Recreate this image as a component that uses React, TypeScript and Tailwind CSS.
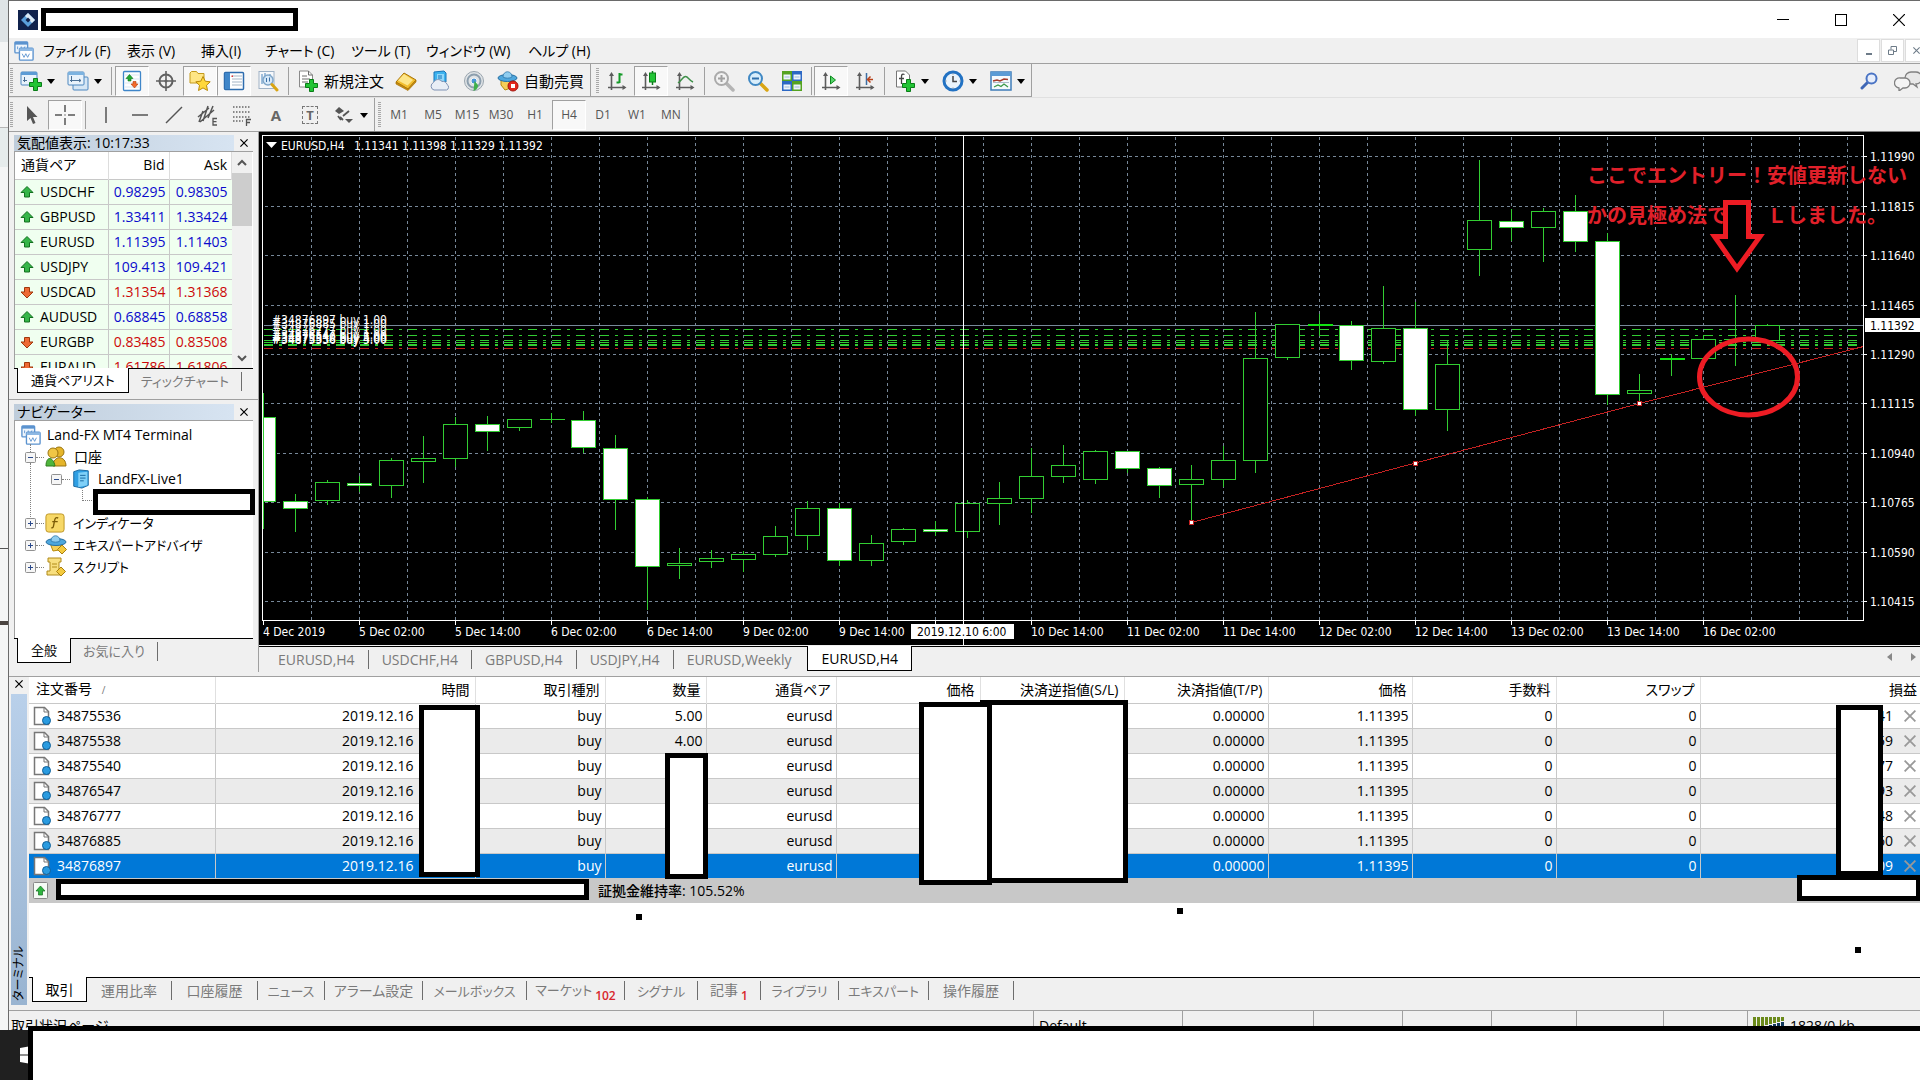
import type { ReactNode } from 'react';

/* ── Data ─────────────────────────────────────────────────────────────────── */

const MENUS = [
  { label: 'ファイル (F)', width: 'w-[84px]' },
  { label: '表示 (V)', width: 'w-[74px]' },
  { label: '挿入(I)', width: 'w-[64px]' },
  { label: 'チャート (C)', width: 'w-[86px]' },
  { label: 'ツール (T)', width: 'w-[75px]' },
  { label: 'ウィンドウ (W)', width: 'w-[102px]' },
  { label: 'ヘルプ (H)', width: 'w-[84px]' },
];

const TIMEFRAMES = ['M1', 'M5', 'M15', 'M30', 'H1', 'H4', 'D1', 'W1', 'MN'];

const QUOTES = [
  { symbol: 'USDCHF', bid: '0.98295', ask: '0.98305', up: true },
  { symbol: 'GBPUSD', bid: '1.33411', ask: '1.33424', up: true },
  { symbol: 'EURUSD', bid: '1.11395', ask: '1.11403', up: true },
  { symbol: 'USDJPY', bid: '109.413', ask: '109.421', up: true },
  { symbol: 'USDCAD', bid: '1.31354', ask: '1.31368', up: false },
  { symbol: 'AUDUSD', bid: '0.68845', ask: '0.68858', up: true },
  { symbol: 'EURGBP', bid: '0.83485', ask: '0.83508', up: false },
  { symbol: 'EURAUD', bid: '1.61786', ask: '1.61806', up: false },
];

// [high, low, body top, body bottom, kind] — w: bear, h: bull, l: doji, g: bright doji
type Candle = [number, number, number, number, 'w' | 'h' | 'l' | 'g'];
const CANDLES: Candle[] = [
  [392, 528, 417, 501, 'w'], [493, 531, 501, 508, 'w'], [479, 504, 482, 500, 'h'], [475, 491, 483, 485, 'w'],
  [457, 497, 460, 485, 'h'], [435, 482, 458, 461, 'h'], [416, 466, 424, 458, 'h'], [415, 450, 424, 431, 'w'],
  [418, 430, 419, 427, 'h'], [412, 422, 419, 419, 'l'], [410, 452, 420, 447, 'w'], [434, 529, 448, 499, 'w'],
  [496, 609, 499, 566, 'w'], [547, 578, 563, 565, 'h'], [549, 567, 558, 561, 'h'], [550, 571, 554, 559, 'h'],
  [525, 556, 536, 554, 'h'], [500, 549, 508, 535, 'h'], [502, 565, 508, 560, 'w'], [534, 565, 543, 560, 'h'],
  [527, 544, 529, 541, 'h'], [520, 535, 529, 531, 'w'], [499, 537, 503, 531, 'h'], [481, 524, 498, 503, 'h'],
  [447, 512, 476, 498, 'h'], [444, 482, 465, 476, 'h'], [449, 483, 451, 479, 'h'], [451, 472, 451, 468, 'w'],
  [466, 497, 468, 485, 'w'], [464, 522, 479, 484, 'h'], [445, 486, 460, 479, 'h'], [311, 472, 358, 460, 'h'],
  [324, 359, 324, 357, 'h'], [313, 335, 324, 325, 'g'], [320, 369, 325, 360, 'w'], [285, 363, 328, 361, 'h'],
  [301, 415, 328, 409, 'w'], [339, 430, 364, 409, 'h'], [159, 275, 220, 249, 'h'], [208, 240, 221, 227, 'w'],
  [207, 261, 211, 227, 'h'], [194, 251, 211, 241, 'w'], [232, 404, 241, 394, 'w'], [373, 402, 390, 393, 'h'],
  [353, 375, 358, 359, 'g'], [334, 359, 339, 358, 'h'], [294, 365, 339, 339, 'l'], [323, 341, 325, 340, 'h'],
];

const PRICES = [
  { y: 156, label: '1.11990' }, { y: 206, label: '1.11815' }, { y: 255, label: '1.11640' },
  { y: 305, label: '1.11465' }, { y: 354, label: '1.11290' }, { y: 403, label: '1.11115' },
  { y: 453, label: '1.10940' }, { y: 502, label: '1.10765' }, { y: 552, label: '1.10590' },
  { y: 601, label: '1.10415' },
];

const TIMES = [
  '4 Dec 2019', '5 Dec 02:00', '5 Dec 14:00', '6 Dec 02:00', '6 Dec 14:00', '9 Dec 02:00', '9 Dec 14:00', '',
  '10 Dec 14:00', '11 Dec 02:00', '11 Dec 14:00', '12 Dec 02:00', '12 Dec 14:00', '13 Dec 02:00',
  '13 Dec 14:00', '16 Dec 02:00',
];

const POSITIONS = [
  { y: 325, label: '#34876897 buy 1.00' }, { y: 329, label: '#34876885 buy 1.00' },
  { y: 335, label: '#34876777 buy 1.00' }, { y: 340, label: '#34876547 buy 1.00' },
  { y: 342, label: '#34875540 buy 5.00' }, { y: 344, label: '#34875538 buy 4.00' },
  { y: 345, label: '#34875536 buy 5.00' },
];

const ORDERS = [
  { id: '34875536', lots: '5.00', profit: '41' },
  { id: '34875538', lots: '4.00', profit: '59' },
  { id: '34875540', lots: '', profit: '77' },
  { id: '34876547', lots: '', profit: '93' },
  { id: '34876777', lots: '', profit: '48' },
  { id: '34876885', lots: '', profit: '60' },
  { id: '34876897', lots: '', profit: '09' },
];

const ORDER_COLS = [
  { label: '時間', width: 'w-[260px]' },
  { label: '取引種別', width: 'w-[130px]' },
  { label: '数量', width: 'w-[101px]' },
  { label: '通貨ペア', width: 'w-[130px]' },
  { label: '価格', width: 'w-[144px]' },
  { label: '決済逆指値(S/L)', width: 'w-[144px]' },
  { label: '決済指値(T/P)', width: 'w-[144px]' },
  { label: '価格', width: 'w-[144px]' },
  { label: '手数料', width: 'w-[144px]' },
  { label: 'スワップ', width: 'w-[144px]' },
];

const TERMINAL_TABS = [
  { label: '運用比率', style: 'w-[85px]' },
  { label: '口座履歴', style: 'w-[86px]' },
  { label: 'ニュース', style: 'w-[67px] text-[13px]' },
  { label: 'アラーム設定', style: 'w-[98px]' },
  { label: 'メールボックス', style: 'w-[104px] text-[13px]' },
  { label: 'マーケット', style: 'w-[98px] text-[13px]', badge: '102' },
  { label: 'シグナル', style: 'w-[73px] text-[13px]' },
  { label: '記事', style: 'w-[63px]', badge: '1' },
  { label: 'ライブラリ', style: 'w-[78px] text-[13px]' },
  { label: 'エキスパート', style: 'w-[90px] text-[13px]' },
  { label: '操作履歴', style: 'w-[85px]' },
];

/* ── Icons ────────────────────────────────────────────────────────────────── */

function Icon({ children, className = 'h-[22px] w-[22px]' }: { children: ReactNode; className?: string }) {
  return (
    <svg className={`shrink-0 ${className}`} viewBox="0 0 22 22" fill="none" aria-hidden="true">
      {children}
    </svg>
  );
}

const Plus = ({ x = 8, y = 8 }: { x?: number; y?: number }) => (
  <path
    transform={`translate(${x} ${y})`}
    d="M4.500 .5h4v4h4v4h-4v4h-4v-4h-4v-4h4z"
    fill="#22c435"
    stroke="#0a7d18"
  />
);

const Axes = () => (
  <>
    <path d="M5.500 20V4M2 17.500h17" stroke="#5c5c5c" strokeWidth="1.600" />
    <path d="M5.500 2l-2.500 4h5zM20.500 17.500l-4-2.500v5z" fill="#5c5c5c" />
  </>
);

const NewChartIcon = () => (
  <Icon>
    <rect x="1" y="2" width="16" height="13" rx="1" fill="#e8f2fb" stroke="#4a86bf" />
    <path d="M1 2h16v3H1z" fill="#5b9bd5" />
    <path d="M4.500 7v5M3 10.500h4" stroke="#4a6f94" />
    <Plus x={9} y={8} />
  </Icon>
);

const ProfilesIcon = () => (
  <Icon>
    <rect x="6" y="7" width="15" height="13" rx="1" fill="#d5e6f5" stroke="#4a86bf" />
    <rect x="1" y="2" width="16" height="13" rx="1" fill="#e8f2fb" stroke="#4a86bf" />
    <path d="M1 2h16v3H1z" fill="#7db3e0" />
    <path d="M4.500 6v6M3 10.500h11M12 9l2 1.500-2 1.500" stroke="#4a6f94" />
  </Icon>
);

const MarketWatchIcon = () => (
  <Icon>
    <rect x="2.500" y="1.500" width="17" height="19" rx="1" fill="#fdfeff" stroke="#3f86c9" strokeWidth="1.300" />
    <path d="M4 5h14M4 9h14M4 13h14M4 17h14" stroke="#d9e6f2" />
    <path d="M8.500 4.500l3.500 4h-2V11H7V8.500H5z" fill="#23a834" stroke="#0c7a1a" strokeWidth=".6" />
    <path d="M13.500 18l3.500-4h-2v-2.500h-3V14h-2z" fill="#f26a2b" stroke="#b53c08" strokeWidth=".6" />
  </Icon>
);

const DataWindowIcon = () => (
  <Icon>
    <circle cx="11" cy="11" r="6.500" stroke="#606060" strokeWidth="2" />
    <path d="M11 1v20M1 11h20" stroke="#606060" strokeWidth="1.600" />
    <circle cx="11" cy="11" r="1.500" fill="#606060" />
  </Icon>
);

const NavigatorIcon = () => (
  <Icon>
    <path d="M1 3l1.500-1.500h5L9 3.500h6V13H1z" fill="#ffe685" stroke="#c49a1c" />
    <path d="M14 6.500l2.200 4.700 5 .6-3.700 3.500 1 5.200-4.500-2.600-4.500 2.600 1-5.200-3.700-3.500 5-.6z" fill="#ffd83b" stroke="#b98a0a" />
  </Icon>
);

const TerminalIcon = () => (
  <Icon>
    <rect x="1.500" y="2.500" width="19" height="17" rx="1" fill="#fff" stroke="#2d6cae" strokeWidth="1.500" />
    <path d="M2 3h5v16H2z" fill="#3f86c9" />
    <path d="M9 6h10M9 9h10M9 12h10M9 15h10" stroke="#a5b5c5" />
    <path d="M8.500 5.500h1.500v1.500h-1.500z" fill="#d33" />
  </Icon>
);

const TesterIcon = () => (
  <Icon>
    <rect x="2" y="1.500" width="15" height="17" fill="#f6f8fb" stroke="#9fb2c6" />
    <path d="M5 4v10M8 3v6M13 4v4" stroke="#4a86bf" />
    <circle cx="11" cy="10" r="5" fill="#cfe5f8" fillOpacity=".85" stroke="#7fa6c9" strokeWidth="1.500" />
    <path d="M9.500 8v4M12.500 7.500v4" stroke="#3b6fa5" />
    <path d="M15 14.500l5 5.500" stroke="#d9a514" strokeWidth="3" strokeLinecap="round" />
  </Icon>
);

const NewOrderIcon = () => (
  <Icon>
    <path d="M2.500 1h9l4 4v12h-13z" fill="#fff" stroke="#8a8a8a" />
    <path d="M11.500 1v4h4M5 6h5M5 9h8M5 12h6" stroke="#6d6d6d" />
    <Plus x={8} y={9} />
  </Icon>
);

const GoldIcon = () => (
  <Icon>
    <path d="M1 12L9 3l12 7-8 9z" fill="#f2bd2c" stroke="#a87408" />
    <path d="M3 10.500L9 4l9 6-5.500 5.500z" fill="#fde68a" />
    <path d="M1 12v2l12 6.500 8-8.500v-2l-8 9z" fill="#c98d0c" stroke="#a87408" strokeWidth=".7" />
  </Icon>
);

const CloudIcon = () => (
  <Icon>
    <path d="M5 2l10-1 2 2v9H5z" fill="#3db3ef" stroke="#1674b8" />
    <path d="M8 4h7v7H8z" fill="#8fd7fa" />
    <path d="M9 6h4M9 8h4" stroke="#1674b8" />
    <path d="M5 20a4 4 0 01-.5-7.500 5 5 0 018.500-1 4 4 0 015 3 3 3 0 01-.5 5.500z" fill="#e9eef6" stroke="#7e91b3" />
  </Icon>
);

const SignalIcon = () => (
  <Icon>
    <circle cx="11" cy="11" r="9.500" fill="#dfe3e6" stroke="#9aa5ae" />
    <circle cx="11" cy="11" r="6.500" stroke="#8d9fae" strokeWidth="2" />
    <circle cx="11" cy="11" r="3" fill="#4a97d8" stroke="#f5f5f5" />
    <path d="M11.500 11l3.500 4c0 3-1.500 5-4.500 6z" fill="#3fb04a" />
  </Icon>
);

const AutoTradeIcon = () => (
  <Icon>
    <path d="M4 9h13l-3 9-6 2-4-5z" fill="#f5cf58" stroke="#b98a0a" />
    <ellipse cx="10.500" cy="8" rx="9.500" ry="3.500" fill="#4ea7dd" stroke="#256fa3" />
    <path d="M6 7c0-7 9-7 9 0-2 1.500-7 1.500-9 0z" fill="#8fcdf0" stroke="#256fa3" strokeWidth=".7" />
    <circle cx="16" cy="16" r="5" fill="#e2261c" stroke="#a3140c" />
    <rect x="14" y="14" width="4" height="4" fill="#fff" />
  </Icon>
);

const BarsIcon = () => (
  <Icon><Axes /><path d="M13.500 3v10M10.500 12.500h3M13.500 4.500h3" stroke="#149a28" strokeWidth="2" /></Icon>
);
const CandlesIcon = () => (
  <Icon><Axes /><path d="M12.500 1v14" stroke="#0a7d18" strokeWidth="1.500" /><rect x="9.500" y="3" width="6" height="9" fill="#22c435" stroke="#0a7d18" /></Icon>
);
const LineIcon = () => (
  <Icon><Axes /><path d="M4 13c3-2 5-6.500 7.500-6.500S15 10 19 12" stroke="#3d8f48" strokeWidth="1.500" /></Icon>
);
const AutoScrollIcon = () => (
  <Icon><Axes /><path d="M10.500 6l5 4-5 4z" fill="#57d46a" stroke="#0a8a1c" /></Icon>
);
const ShiftIcon = () => (
  <Icon><Axes /><path d="M12.500 3v12" stroke="#3c6ea3" strokeWidth="1.500" /><path d="M19 9.500h-5M16.500 6.500l-3 3 3 3" stroke="#b8421a" strokeWidth="1.500" /></Icon>
);

const ZoomIcon = ({ out = false }: { out?: boolean }) => (
  <Icon>
    <path d="M13.500 13.500l6.500 6.500" stroke={out ? '#d9a514' : '#b4b4b4'} strokeWidth="3.500" strokeLinecap="round" />
    <circle cx="8.500" cy="8.500" r="6.500" fill={out ? '#d9eefb' : '#f2f2f2'} stroke={out ? '#4189c4' : '#aaa'} strokeWidth="2" />
    <path d={out ? 'M5 8.500h7' : 'M5 8.500h7M8.500 5v7'} stroke={out ? '#2f6fab' : '#a0a0a0'} strokeWidth="2" />
  </Icon>
);

const TileIcon = () => (
  <Icon>
    <path d="M1 1h10v10H1zM11 11h10v10H11z" fill="#54a320" />
    <path d="M11 1h10v10H11zM1 11h10v10H1z" fill="#2c68c4" />
    <path d="M2.500 4.500h7v5h-7zM12.500 4.500h7v5h-7zM2.500 14.500h7v5h-7zM12.500 14.500h7v5h-7z" fill="#eef5fb" />
    <path d="M3.500 7h5M13.500 7h5M3.500 17h5M13.500 17h5" stroke="#9dbbd8" />
  </Icon>
);

const IndicatorsIcon = () => (
  <Icon>
    <path d="M2.500 1h9l4 4v12h-13z" fill="#fff" stroke="#777" />
    <path d="M10.500 4.500c-2-1-3 0-3 2V14M5 8.500h5" stroke="#444" strokeWidth="1.300" />
    <Plus x={8} y={9} />
  </Icon>
);

const ClockIcon = () => (
  <Icon>
    <circle cx="11" cy="11" r="9" fill="#e9f3fb" stroke="#2272c3" strokeWidth="3" />
    <path d="M11 6v5.500h4" stroke="#444" strokeWidth="1.500" />
    <path d="M11 3.500v1M11 17.500v1M3.500 11h1M17.500 11h1" stroke="#888" />
  </Icon>
);

const TemplateIcon = () => (
  <Icon>
    <rect x="1" y="2" width="20" height="18" fill="#f6fafd" stroke="#3f7cb8" strokeWidth="1.500" />
    <path d="M1 2h20v4H1z" fill="#5b9bd5" />
    <path d="M3 11l4-1 3 1 4-2 4 .5" stroke="#a63a2a" strokeWidth="1.500" />
    <path d="M3 12.500h16" stroke="#9ab" strokeWidth=".8" />
    <path d="M4 17l4-2 3 1.500 3-2.500 4 3" stroke="#3d9a48" strokeWidth="1.300" />
  </Icon>
);

const SheetsIcon = ({ className = 'h-[20px] w-[20px]' }: { className?: string }) => (
  <Icon className={className}>
    <rect x="1" y="1" width="14" height="12" rx="1" fill="#eef5fc" stroke="#5b93cf" strokeWidth="1.500" />
    <path d="M1 1h14v3H1z" fill="#5b93cf" />
    <path d="M4 9V6M8 10V6M11 8l1-2" stroke="#5b93cf" />
    <rect x="6" y="8" width="15" height="13" rx="1" fill="#fff" stroke="#5b93cf" strokeWidth="1.500" />
    <path d="M6 8h15v3H6z" fill="#8db8e3" />
    <path d="M9 14l2 4 2-4 2 4 2-4" stroke="#5b93cf" />
  </Icon>
);

const ArrowIcon = ({ up }: { up: boolean }) => (
  <svg className="h-[14px] w-[14px] shrink-0" viewBox="0 0 14 14" aria-hidden="true">
    {up
      ? <path d="M7 1.500l6 6H9.500V12h-5V7.500H1z" fill="#35b548" stroke="#12701f" />
      : <path d="M7 13l6-6H9.500V2.500h-5V7H1z" fill="#ee6a35" stroke="#a1370b" />}
  </svg>
);

const OrderIcon = () => (
  <svg className="h-[20px] w-[19px] shrink-0" viewBox="0 0 19 20" aria-hidden="true">
    <path d="M1.500 1.500h10l4 4v13h-14z" fill="#fff" stroke="#777" strokeWidth="1.500" />
    <path d="M11 1.500v4.500h4.500" fill="none" stroke="#777" />
    <circle cx="13.500" cy="14.500" r="4" fill="#2a9be0" stroke="#0f5f99" />
  </svg>
);

const Caret = () => (
  <svg className="h-[5px] w-[8px] shrink-0" viewBox="0 0 8 5" aria-hidden="true">
    <path d="M0 0h8L4 5z" fill="#000" />
  </svg>
);

const Cross = ({ className = 'h-[9px] w-[9px]' }: { className?: string }) => (
  <svg className={className} viewBox="0 0 10 10" aria-hidden="true">
    <path d="M.5 .5l9 9M9.500 .5l-9 9" stroke="currentColor" strokeWidth="1.500" fill="none" />
  </svg>
);

/* ── Small building blocks ────────────────────────────────────────────────── */

const PRESSED = 'border border-[#a0a0a0] border-r-white border-b-white bg-[#f8f8f8]';

function Tool({ label, pressed, width = 'w-[34px]', children }: {
  label: string; pressed?: boolean; width?: string; children: ReactNode;
}) {
  return (
    <button
      aria-label={label}
      aria-pressed={pressed}
      className={`flex h-[30px] shrink-0 items-center justify-center gap-[5px] ${width} ${pressed ? PRESSED : ''}`}
    >
      {children}
    </button>
  );
}

const Divider = ({ tight }: { tight?: boolean }) => (
  <span className={`h-[28px] w-px shrink-0 bg-[#a0a0a0] ${tight ? 'mx-[2px]' : 'mx-[3px]'}`} />
);

const Grip = () => (
  <span className="mx-px h-[26px] w-[3px] shrink-0 bg-[repeating-linear-gradient(#a8a8a8_0_1px,transparent_1px_2px)]" />
);

// Blank white patch laid over private values
const Patch = ({ className }: { className: string }) => (
  <div className={`absolute border-[5px] border-black bg-white ${className}`} />
);

function PanelTitle({ title }: { title: string }) {
  return (
    <div className="flex h-[16px] items-center">
      <h2 className="h-full w-[220px] bg-linear-to-r from-[#bfcddb] to-[#d7e4f2] pl-[3px] text-sm leading-[15px]">{title}</h2>
      <button aria-label={`${title} 閉じる`} className="flex flex-1 justify-center"><Cross className="h-[8px] w-[8px]" /></button>
    </div>
  );
}

function PanelTabs({ active, other }: { active: string; other: string }) {
  return (
    <div className="flex h-[26px] items-start border-t border-black pl-[3px] text-[13px] whitespace-nowrap">
      <button className="-mt-px h-[25px] shrink-0 border border-t-0 border-black bg-white px-[13px] leading-[24px]">{active}</button>
      <button className="mt-[3px] h-[19px] shrink-0 border-r border-[#6d6d6d] px-[12px] leading-[17px] text-[#7a7a7a]">{other}</button>
    </div>
  );
}

/* ── Toolbars ─────────────────────────────────────────────────────────────── */

function MainToolbar() {
  return (
    <div className="flex h-[34px] items-center border-b border-[#e0e0e0]">
      <div className="flex h-full items-center border-r border-b border-[#a0a0a0] pt-[2px]">
        <Grip />
        <Tool label="新規チャート" width="w-[47px]"><NewChartIcon /><Caret /></Tool>
        <Tool label="プロファイル" width="w-[47px]"><ProfilesIcon /><Caret /></Tool>
        <Divider />
        <Tool label="気配値表示" pressed><MarketWatchIcon /></Tool>
        <Tool label="データウィンドウ"><DataWindowIcon /></Tool>
        <Tool label="ナビゲーター" pressed><NavigatorIcon /></Tool>
        <Tool label="ターミナル" pressed><TerminalIcon /></Tool>
        <Tool label="ストラテジーテスター"><TesterIcon /></Tool>
        <Divider />
        <Tool label="新規注文" width="w-[97px]"><NewOrderIcon /><span className="text-[15px]">新規注文</span></Tool>
        <Tool label="MetaEditor"><GoldIcon /></Tool>
        <Tool label="クラウド"><CloudIcon /></Tool>
        <Tool label="シグナル"><SignalIcon /></Tool>
        <Tool label="自動売買" width="w-[99px]"><AutoTradeIcon /><span className="text-[15px]">自動売買</span></Tool>
      </div>
      <div className="flex h-full items-center border-r border-b border-[#a0a0a0] pt-[2px] pl-[4px]">
        <Grip />
        <Tool label="バーチャート"><BarsIcon /></Tool>
        <Tool label="ローソク足" pressed><CandlesIcon /></Tool>
        <Tool label="ラインチャート"><LineIcon /></Tool>
        <Divider tight />
        <Tool label="拡大"><ZoomIcon /></Tool>
        <Tool label="縮小"><ZoomIcon out /></Tool>
        <Tool label="整列"><TileIcon /></Tool>
        <Divider tight />
        <Tool label="自動スクロール" pressed><AutoScrollIcon /></Tool>
        <Tool label="チャートシフト"><ShiftIcon /></Tool>
        <Divider tight />
        <Tool label="インディケータ" width="w-[48px]"><IndicatorsIcon /><Caret /></Tool>
        <Tool label="時間足設定" width="w-[48px]"><ClockIcon /><Caret /></Tool>
        <Tool label="定型チャート" width="w-[48px]"><TemplateIcon /><Caret /></Tool>
      </div>
      <div className="ml-auto flex items-center gap-[16px]">
        <button aria-label="検索">
          <svg className="h-[18px] w-[18px]" viewBox="0 0 18 18" fill="none">
            <path d="M7.500 10.500L2 16" stroke="#3f67b5" strokeWidth="3" strokeLinecap="round" />
            <circle cx="11.500" cy="6.500" r="5" fill="#e7eefb" stroke="#4a74c4" strokeWidth="2" />
          </svg>
        </button>
        <button aria-label="チャット">
          <svg className="h-[20px] w-[34px]" viewBox="0 0 34 20" fill="none">
            <path d="M17 1h5a6 6 0 010 12l1 3-4-3h-2a6 6 0 010-12z" fill="#e8e8e8" stroke="#808080" strokeWidth="1.300" />
            <path d="M6 7h5a5 5 0 010 10H9l-4 3v-3A5 5 0 016 7z" fill="#f4f4f4" stroke="#808080" strokeWidth="1.300" />
          </svg>
        </button>
      </div>
    </div>
  );
}

function DrawingToolbar() {
  return (
    <div className="flex h-[33px] items-center">
      <div className="flex h-full items-center border-r border-[#a0a0a0] pt-px">
        <Grip />
        <Tool label="カーソル">
          <Icon><path d="M7 2v15l3.500-3 2.500 6 2.500-1-2.500-6h4.500z" fill="#555" /></Icon>
        </Tool>
        <Tool label="十字カーソル" pressed>
          <Icon><path d="M11 1v7M11 14v7M1 11h7M14 11h7M10.500 11h1" stroke="#555" strokeWidth="1.500" /></Icon>
        </Tool>
        <Divider />
        <Tool label="垂直線"><Icon><path d="M11 3v16" stroke="#555" strokeWidth="1.500" /></Icon></Tool>
        <Tool label="水平線"><Icon><path d="M3 11h16" stroke="#555" strokeWidth="1.500" /></Icon></Tool>
        <Tool label="トレンドライン"><Icon><path d="M3 19L19 3" stroke="#555" strokeWidth="1.500" /></Icon></Tool>
        <Tool label="チャネル">
          <Icon>
            <path d="M1 13L12 4M3 18L17 6M2 18l4-11M6 17l5-15M11 14l5-12" stroke="#555" strokeWidth="1.500" />
            <path d="M20 14.500h-4v6.500h4M16 17.700h3.500" stroke="#555" strokeWidth="1.300" />
          </Icon>
        </Tool>
        <Tool label="フィボナッチ">
          <Icon>
            <path d="M2 3h17M2 8h17M2 13h17M2 17h10" stroke="#666" strokeWidth="1.500" strokeDasharray="1.500 1.500" />
            <path d="M20 15.500h-4.500V22M15.500 18.500H19" stroke="#555" strokeWidth="1.300" />
          </Icon>
        </Tool>
        <Tool label="テキスト"><span className="text-[15px] font-bold text-[#666]">A</span></Tool>
        <Tool label="テキストラベル">
          <span className="h-[18px] w-[16px] border border-dashed border-[#777] text-[13px] leading-[16px] font-bold text-[#666]">T</span>
        </Tool>
        <Tool label="矢印" width="w-[47px]">
          <Icon>
            <path d="M6 3l5 4-5 3-4-3zM16 19l-4-4h8z" fill="#555" />
            <path d="M7 13l3 3M10 12l6-5M5 12l3 4" stroke="#555" strokeWidth="1.800" />
          </Icon>
          <Caret />
        </Tool>
      </div>
      <div className="flex h-full items-center border-r border-[#a0a0a0] pt-px pl-[2px]">
        <Grip />
        {TIMEFRAMES.map((tf) => (
          <Tool key={tf} label={tf} pressed={tf === 'H4'}>
            <span className="text-xs font-medium text-[#555]">{tf}</span>
          </Tool>
        ))}
      </div>
    </div>
  );
}

/* ── Left dock ────────────────────────────────────────────────────────────── */

function MarketWatch() {
  return (
    <section className="px-[5px] pt-[3px]">
      <PanelTitle title="気配値表示: 10:17:33" />
      <div className="flex h-[217px] overflow-hidden border-t border-l border-[#a0a0a0] bg-white">
        <table className="h-fit w-[217px] table-fixed border-collapse text-sm leading-[24px]">
          <thead>
            <tr className="h-[27px] border-b border-[#c8c8c8]">
              <th className="w-[93px] border-r border-[#ddd] pl-[6px] text-left font-normal">通貨ペア</th>
              <th className="w-[61px] border-r border-[#ddd] pr-[4px] text-right font-normal">Bid</th>
              <th className="border-r border-[#ddd] pr-[4px] text-right font-normal">Ask</th>
            </tr>
          </thead>
          <tbody>
            {QUOTES.map((q) => (
              <tr key={q.symbol} className="h-[25px] border-b border-[#c8c8c8] bg-[#f0fff0]">
                <td className="border-r border-[#c8c8c8] pl-[5px]">
                  <span className="flex items-center gap-[6px]"><ArrowIcon up={q.up} />{q.symbol}</span>
                </td>
                <td className={`border-r border-[#c8c8c8] pr-[3px] text-right ${q.up ? 'text-[#0a0acc]' : 'text-[#cc0a0a]'}`}>{q.bid}</td>
                <td className={`pr-[4px] text-right ${q.up ? 'text-[#0a0acc]' : 'text-[#cc0a0a]'}`}>{q.ask}</td>
              </tr>
            ))}
          </tbody>
        </table>
        <div className="flex w-[20px] flex-col items-center bg-[#f0f0f0]">
          <svg className="mt-[6px] h-[10px] w-[10px]" viewBox="0 0 10 10"><path d="M1 7l4-4 4 4" fill="none" stroke="#555" strokeWidth="2" /></svg>
          <span className="mt-[5px] h-[53px] w-full bg-[#cdcdcd]" />
          <svg className="mt-auto mb-[5px] h-[10px] w-[10px]" viewBox="0 0 10 10"><path d="M1 3l4 4 4-4" fill="none" stroke="#555" strokeWidth="2" /></svg>
        </div>
      </div>
      <PanelTabs active="通貨ペアリスト" other="ティックチャート" />
    </section>
  );
}

const Expander = ({ open }: { open?: boolean }) => (
  <svg className="h-[11px] w-[11px] shrink-0" viewBox="0 0 11 11" aria-hidden="true">
    <rect x=".5" y=".5" width="10" height="10" rx="1" fill="#f6f6f6" stroke="#919191" />
    <path d={open ? 'M3 5.500h5' : 'M3 5.500h5M5.500 3v5'} stroke="#2b4a8b" />
  </svg>
);

const Dots = () => <span className="w-[8px] shrink-0 border-t border-dotted border-[#808080]" />;

function Navigator() {
  return (
    <section className="mt-[5px] flex flex-1 flex-col border-t border-[#a0a0a0] px-[5px] pt-[4px] pb-[8px]">
      <PanelTitle title="ナビゲーター" />
      <ul className="relative flex-1 border-t border-l border-[#a0a0a0] bg-white pt-[3px] text-sm leading-[22px]">
        <li className="flex h-[22px] items-center gap-[6px] pl-[6px]"><SheetsIcon />Land-FX MT4 Terminal</li>
        <li className="flex h-[22px] items-center pl-[10px]">
          <Expander open /><Dots />
          <Icon className="mr-[7px] ml-px h-[22px] w-[22px]">
            <circle cx="14" cy="6" r="5" fill="#e5b52a" stroke="#9a7410" />
            <circle cx="8" cy="7" r="5" fill="#f0c645" stroke="#9a7410" />
            <path d="M8 20c0-11 13-11 13 0z" fill="#e5b52a" stroke="#9a7410" />
            <path d="M1 20c0-10 7-10 9 0z" fill="#4fb53c" stroke="#2c7a1d" />
          </Icon>
          口座
        </li>
        <li className="flex h-[22px] items-center pl-[36px]">
          <Expander open /><Dots />
          <Icon className="mr-[7px] ml-px h-[20px] w-[20px]">
            <path d="M3 3l6-2 10 1v16l-7 3-9-2z" fill="#2f9fe3" stroke="#12629c" />
            <path d="M8 4l10-1v15l-10 2z" fill="#7fd0f8" />
            <path d="M10 7h6M10 10h6M10 13h4" stroke="#12629c" />
          </Icon>
          LandFX-Live1
        </li>
        <li className="flex h-[22px] pl-[67px]">
          <span className="h-[11px] w-[12px] border-b border-l border-dotted border-[#808080]" />
        </li>
        <li className="flex h-[22px] items-center pl-[10px] text-[13px]">
          <Expander /><Dots />
          <Icon className="mr-[8px] ml-px h-[20px] w-[20px]">
            <rect x="1" y="1" width="20" height="20" rx="3" fill="#f7d867" stroke="#b98f1b" />
            <path d="M14.500 5.500c-2.500-1-3.500 0-4 3l-1 5c-.4 2.500-1 3-2.500 2.500M8 9.500h6" stroke="#7a5a06" strokeWidth="1.500" />
          </Icon>
          インディケータ
        </li>
        <li className="flex h-[22px] items-center pl-[10px] text-[13px]">
          <Expander /><Dots />
          <Icon className="mr-[6px] ml-px h-[22px] w-[22px]">
            <path d="M5 9h12l-3 7-6 1z" fill="#f5cf58" stroke="#b98a0a" />
            <ellipse cx="11" cy="8" rx="10" ry="3.500" fill="#4ea7dd" stroke="#256fa3" />
            <path d="M6 7c0-7 9-7 9 0-2 1.500-7 1.500-9 0z" fill="#8fcdf0" stroke="#256fa3" strokeWidth=".7" />
            <path d="M17 11l4.500 4.500L17 20l-4.500-4.500z" fill="#f4ca3e" stroke="#a87f10" />
          </Icon>
          エキスパートアドバイザ
        </li>
        <li className="flex h-[22px] items-center pl-[10px] text-[13px]">
          <Expander /><Dots />
          <Icon className="mr-[6px] ml-px h-[22px] w-[22px]">
            <path d="M3 2h13v4h-2v9h2v4H2v-4h3V6H3z" fill="#f8df7f" stroke="#b08a1a" />
            <path d="M7 8h5M7 11h5" stroke="#b08a1a" />
            <path d="M16 11l4.500 4.500L16 20l-4.500-4.500z" fill="#f4ca3e" stroke="#a87f10" />
          </Icon>
          スクリプト
        </li>
        <span className="absolute top-[23px] left-[15px] h-[8px] border-l border-dotted border-[#808080]" />
        <span className="absolute top-[42px] left-[15px] h-[54px] border-l border-dotted border-[#808080]" />
        <Patch className="top-[68px] left-[78px] h-[26px] w-[162px]" />
      </ul>
      <PanelTabs active="全般" other="お気に入り" />
    </section>
  );
}

/* ── Chart ────────────────────────────────────────────────────────────────── */

function CandleShape({ index, candle }: { index: number; candle: Candle }) {
  const [high, low, top, bottom, kind] = candle;
  const x = 263 + index * 32;
  const left = index === 0 ? x : x - 12;
  const right = x + 12;
  if (kind === 'l' || kind === 'g') {
    return (
      <g stroke={kind === 'g' ? '#12e312' : '#32cd32'}>
        <path d={`M${x} ${high}V${low}`} stroke="#32cd32" />
        <path d={`M${left} ${(top + bottom) / 2}H${right + 1}`} strokeWidth={kind === 'g' ? 2 : 1} />
      </g>
    );
  }
  return (
    <g stroke="#32cd32">
      <path d={`M${x} ${high}V${low}`} />
      <rect x={left} y={top} width={right - left} height={bottom - top} fill={kind === 'w' ? '#fff' : '#000'} />
    </g>
  );
}

function PriceChart() {
  return (
    <svg
      className="block h-[513px] w-full bg-black font-['DejaVu_Sans_Condensed','Noto_Sans',sans-serif] text-xs"
      role="img"
      aria-label="EURUSD,H4"
    >
      <g transform="translate(-258.500 -131.500)" shapeRendering="crispEdges" fill="none">
        {/* Grid */}
        <g stroke="#778899" strokeDasharray="3 3">
          {PRICES.map((p) => <path key={p.y} d={`M264 ${p.y}H1863`} />)}
          {Array.from({ length: 33 }, (_, i) => <path key={i} d={`M${311 + i * 48} 136V620`} />)}
        </g>

        {/* Open positions and ask line */}
        <g stroke="#32cd32" strokeDasharray="9 6 3 6">
          {POSITIONS.map((p) => <path key={p.label} d={`M263 ${p.y}H1863`} />)}
        </g>
        <path d="M263 348H1863" stroke="#c81e1e" strokeDasharray="9 6 3 6" />
        <path d="M263 325H1863" stroke="#778899" />

        {CANDLES.map((c, i) => <CandleShape key={i} index={i} candle={c} />)}

        {/* Trend line with its three handles */}
        <path d="M1191 522L1639 403L1863 346" stroke="#c42222" />
        {[[1191, 522], [1415, 463], [1639, 403]].map(([x, y]) => (
          <rect key={x} x={x - 2} y={y - 2} width="4" height="4" fill="#fff" stroke="#c42222" />
        ))}

        {/* Frame and axes */}
        <path d="M262 620V135H1863V620H262" stroke="#fff" />
        <g stroke="#fff">
          {PRICES.map((p) => <path key={p.y} d={`M1863 ${p.y}h3`} />)}
          {TIMES.map((_, i) => <path key={i} d={`M${263 + i * 96} 620v4`} />)}
        </g>
        <path d="M963 135V645" stroke="#fff" />
      </g>

      <g transform="translate(-259 -132)" fill="#fff">
        <path d="M266 142h11l-5.500 6z" />
        <text x="281" y="150">EURUSD,H4</text>
        <text x="354" y="150">1.11341 1.11398 1.11329 1.11392</text>
        {POSITIONS.map((p) => <text key={p.label} x="272" y={p.y - 1}>{p.label}</text>)}
        {PRICES.map((p) => <text key={p.y} x="1870" y={p.y + 5}>{p.label}</text>)}
        {TIMES.map((t, i) => t && <text key={t} x={263 + i * 96} y="636">{t}</text>)}
        <rect x="911" y="624" width="103" height="15" />
        <text x="917" y="636" fill="#000">2019.12.10 6:00</text>
        <rect x="1865" y="318" width="70" height="14" />
        <text x="1870" y="330" fill="#000">1.11392</text>

        {/* Trader's notes */}
        <g className="font-['Noto_Sans_CJK_JP',sans-serif] text-[20px] font-bold [font-feature-settings:normal]" fill="#e0202a">
          <text x="1587" y="183">ここでエントリー！安値更新しない</text>
          <text x="1587" y="223">かの見極め法で</text>
          <text x="1767" y="223">Ｌしました。</text>
        </g>
        <g stroke="#ed1c24" strokeWidth="5">
          <path d="M1725.500 202.500h23v34h11.500l-23 32-22.500-32h11z" fill="#000" />
          <ellipse cx="1748.500" cy="377" rx="49" ry="38" fill="none" />
        </g>
      </g>
    </svg>
  );
}

function ChartTabs() {
  const tabs = ['EURUSD,H4', 'USDCHF,H4', 'GBPUSD,H4', 'USDJPY,H4', 'EURUSD,Weekly'];
  return (
    <div className="mt-px flex h-[26px] border-t border-black pl-[6px] text-sm">
      {tabs.map((t, i) => (
        <button
          key={t}
          className={`mt-[3px] h-[19px] px-[13px] leading-[17px] text-[#7a7a7a] ${i < 4 ? 'border-r border-[#6d6d6d]' : ''}`}
        >
          {t}
        </button>
      ))}
      <button className="-mt-px ml-[3px] h-[25px] border border-t-0 border-black bg-white px-[13px] leading-[25px]">EURUSD,H4</button>
      <div className="mr-[12px] ml-auto flex items-center gap-[19px]">
        <button aria-label="前へ"><svg className="mb-[5px] h-[8px] w-[5px]" viewBox="0 0 5 8"><path d="M5 0v8L0 4z" fill="#888" /></svg></button>
        <button aria-label="次へ"><svg className="mb-[5px] h-[8px] w-[5px]" viewBox="0 0 5 8"><path d="M0 0v8l5-4z" fill="#888" /></svg></button>
      </div>
    </div>
  );
}

/* ── Terminal ─────────────────────────────────────────────────────────────── */

function OrdersTable() {
  return (
    <table className="w-full table-fixed border-collapse text-sm leading-[24px]">
      <thead>
        <tr className="h-[26px] border-b border-[#c8c8c8]">
          <th className="w-[186px] border-r border-[#e0e0e0] pl-[7px] text-left font-normal">注文番号 <span className="ml-[6px] text-[10px] text-[#777]">/</span></th>
          {ORDER_COLS.map((c, i) => (
            <th key={i} className={`border-r border-[#e0e0e0] pr-[5px] text-right font-normal whitespace-nowrap ${c.width}`}>{c.label}</th>
          ))}
          <th className="pr-[11px] text-right font-normal">損益</th>
        </tr>
      </thead>
      <tbody className="[&_td]:border-r [&_td]:border-[#c8c8c8] [&_td]:pr-[3px] [&_td]:text-right [&_td:last-child]:border-r-0">
        {ORDERS.map((o, i) => (
          <tr
            key={o.id}
            className={`h-[25px] ${i === 6 ? 'bg-[#0078d7] text-white' : `border-b border-[#c8c8c8] ${i % 2 ? 'bg-[#ebebeb]' : 'bg-white'}`}`}
          >
            <td><span className="flex items-center gap-[5px] pl-[4px]"><OrderIcon />{o.id}</span></td>
            <td><span className="pr-[58px]">2019.12.16</span></td>
            <td>buy</td>
            <td>{o.lots}</td>
            <td>eurusd</td>
            <td />
            <td />
            <td>0.00000</td>
            <td>1.11395</td>
            <td>0</td>
            <td>0</td>
            <td>
              <span className="flex items-center justify-end gap-[11px] pr-[9px]">
                {o.profit}
                <button aria-label={`${o.id} 決済`} className="text-[#999]"><Cross className="h-[12px] w-[12px]" /></button>
              </span>
            </td>
          </tr>
        ))}
      </tbody>
      <tfoot>
        <tr className="h-[25px] bg-[#c8c8c8]">
          <td colSpan={12}>
            <span className="flex items-center">
              <svg className="ml-[4px] h-[17px] w-[15px]" viewBox="0 0 15 17" aria-hidden="true">
                <rect x=".5" y=".5" width="14" height="16" rx="1" fill="#f5fbf5" stroke="#888" />
                <path d="M7.500 4l4.500 5H9.500v4h-4V9H3z" fill="#2fb53f" stroke="#12701f" strokeWidth=".7" />
              </svg>
              <span className="ml-[550px] font-medium">証拠金維持率: 105.52%</span>
            </span>
          </td>
        </tr>
      </tfoot>
    </table>
  );
}

function Terminal() {
  return (
    <section className="mt-[4px] flex flex-1 border-t border-[#a0a0a0]">
      <div className="flex w-[20px] flex-col items-center">
        <button aria-label="ターミナルを閉じる" className="-mt-px flex h-[15px] items-center"><Cross className="h-[8px] w-[8px]" /></button>
        <div className="mt-[3px] mb-[5px] flex w-[16px] flex-1 items-end justify-center bg-linear-to-b from-[#b9d0ea] to-[#99b4d1] pb-[4px]">
          <span className="rotate-180 text-xs leading-[16px] [text-orientation:sideways] [writing-mode:vertical-rl]">ターミナル</span>
        </div>
      </div>
      <div className="flex flex-1 flex-col">
        <div className="relative flex-1 bg-white">
          <OrdersTable />
          <Patch className="top-[28px] left-[390px] h-[172px] w-[61px]" />
          <Patch className="top-[76px] left-[636px] h-[126px] w-[43px]" />
          <Patch className="top-[23px] left-[951px] h-[183px] w-[148px]" />
          <Patch className="top-[25px] left-[890px] h-[183px] w-[73px]" />
          <Patch className="top-[28px] left-[1807px] h-[171px] w-[47px]" />
          <Patch className="top-[198px] left-[1768px] h-[26px] w-[124px]" />
          <Patch className="top-[202px] left-[27px] h-[21px] w-[533px]" />
          <span className="absolute top-[237px] left-[607px] h-[6px] w-[6px] bg-black" />
          <span className="absolute top-[231px] left-[1148px] h-[6px] w-[6px] bg-black" />
          <span className="absolute top-[270px] left-[1826px] h-[6px] w-[6px] bg-black" />
        </div>
        <div className="flex h-[33px] items-start border-t border-black pl-[3px] text-sm">
          <button className="-mt-px h-[25px] w-[55px] border border-t-0 border-black bg-white leading-[25px]">取引</button>
          {TERMINAL_TABS.map((t) => (
            <button key={t.label} className={`mt-[3px] h-[19px] border-r border-[#6d6d6d] leading-[16px] whitespace-nowrap text-[#7a7a7a] ${t.style}`}>
              {t.label}
              {t.badge && <sub className="-bottom-[5px] ml-[3px] text-xs font-semibold text-[#d8262c]">{t.badge}</sub>}
            </button>
          ))}
        </div>
      </div>
    </section>
  );
}

function StatusBar() {
  const cell = 'h-[20px] border-l border-[#a0a0a0]';
  return (
    <footer className="flex h-[20px] items-start overflow-hidden border-t border-[#a0a0a0] text-sm leading-[30px]">
      <span className="w-[1024px] pl-[2px]">取引状況ページ</span>
      <span className={`w-[149px] pl-[5px] ${cell}`}>Default</span>
      <span className={`w-[131px] ${cell}`} />
      <span className={`w-[89px] ${cell}`} />
      <span className={`w-[89px] ${cell}`} />
      <span className={`w-[85px] ${cell}`} />
      <span className={`w-[87px] ${cell}`} />
      <span className={`w-[84px] ${cell}`} />
      <span className={`flex gap-[5px] pl-[5px] ${cell}`}>
        <svg className="mt-[6px] h-[14px] w-[32px]" viewBox="0 0 32 14" aria-hidden="true">
          {[0, 4, 8, 12, 16, 20, 24, 28].map((x, i) => (
            <g key={x}>
              <rect x={x} y="0" width="3" height={i < 3 ? 14 : 11 - i} fill="#6b8a1a" />
              {i > 2 && <rect x={x} y={12 - i} width="3" height={i + 2} fill="#12385c" />}
            </g>
          ))}
        </svg>
        1828/0 kb
      </span>
    </footer>
  );
}

/* ── Page ─────────────────────────────────────────────────────────────────── */

export default function App() {
  return (
    <div className="relative flex min-h-screen flex-col overflow-hidden bg-[#202020] font-['Open_Sans','Noto_Sans_CJK_JP',sans-serif] text-black [font-feature-settings:'palt']">
      <div className="flex flex-1">
        {/* Slice of the desktop behind the window */}
        <div className="flex w-[8px] shrink-0 flex-col bg-[#f4f5f5]">
          <span className="h-[42px] bg-[#dfe4e6]" />
          <span className="h-[85px]" />
          <span className="h-[40px] border-t border-[#b5b5b5] bg-[#e6ecec]" />
          <span className="h-[381px]" />
          <span className="h-[73px] border-t border-[#555]" />
          <span className="h-[4px] bg-[#4a4340]" />
        </div>

        {/* Application window, running a little past the right edge */}
        <div className="-mr-2 flex flex-1 flex-col border-t border-l border-[#6a6a6a] bg-[#f0f0f0]">
          <header className="relative flex h-[37px] items-center bg-white">
            <svg className="ml-[9px] h-[20px] w-[20px]" viewBox="0 0 20 20" aria-hidden="true">
              <rect width="20" height="20" fill="#10224c" />
              <path d="M10 3l7 7-7 7-7-7z" fill="#5aa0dc" />
              <path d="M10 3l7 7-3 3-7-7z" fill="#dbe9f5" />
              <path d="M10 7.500l2.500 2.500L10 12.500 7.500 10z" fill="#10224c" />
            </svg>
            <Patch className="top-[7px] left-[32px] h-[23px] w-[257px]" />
            <div className="ml-auto flex">
              <button aria-label="最小化" className="flex h-[36px] w-[58px] items-center justify-center"><span className="h-px w-[12px] bg-black" /></button>
              <button aria-label="最大化" className="flex h-[36px] w-[58px] items-center justify-center"><span className="h-[12px] w-[12px] border border-black" /></button>
              <button aria-label="閉じる" className="flex h-[36px] w-[58px] items-center justify-center">
                <svg className="h-[12px] w-[12px]" viewBox="0 0 12 12"><path d="M0 0l12 12M12 0L0 12" stroke="#000" strokeWidth="1.200" /></svg>
              </button>
            </div>
          </header>

          <nav className="flex h-[26px] items-center border-b border-[#a0a0a0] pl-[5px]">
            <SheetsIcon />
            <div className="ml-[9px] flex text-sm">
              {MENUS.map((m) => (
                <button key={m.label} className={`text-left whitespace-nowrap ${m.width}`}>{m.label}</button>
              ))}
            </div>
            <div className="ml-auto flex gap-px text-[#6d7b88]">
              <button aria-label="チャートを最小化" className="flex h-[23px] w-[23px] items-end justify-center border border-[#ddd] bg-white pb-[6px]"><span className="h-[2px] w-[6px] bg-current" /></button>
              <button aria-label="元に戻す" className="flex h-[23px] w-[23px] items-center justify-center border border-[#ddd] bg-white">
                <svg className="h-[9px] w-[9px]" viewBox="0 0 9 9" fill="none" stroke="currentColor"><path d="M.5 4h5v4.500h-5zM3 3.500v-3h5.500V5.500H6" /></svg>
              </button>
              <button aria-label="チャートを閉じる" className="flex h-[23px] w-[23px] items-center justify-center border border-[#ddd] bg-white"><Cross className="h-[7px] w-[7px]" /></button>
            </div>
          </nav>

          <MainToolbar />
          <DrawingToolbar />

          <main className="flex">
            <aside className="flex w-[250px] shrink-0 flex-col border-t border-r border-[#a0a0a0]">
              <MarketWatch />
              <Navigator />
            </aside>
            <div className="min-w-0 flex-1 border-t border-[#808080]">
              <PriceChart />
              <ChartTabs />
            </div>
          </main>

          <Terminal />
          <StatusBar />
        </div>
      </div>

      {/* Taskbar */}
      <div className="flex h-[50px] items-center pl-[20px]">
        <svg className="h-[20px] w-[20px]" viewBox="0 0 20 20" aria-hidden="true">
          <path d="M0 3l8.500-1.500V9.500H0zM9.500 1.300L20 0v9.500H9.500zM0 10.500h8.500v8L0 17zM9.500 10.500H20V20L9.500 18.700z" fill="#fff" />
        </svg>
      </div>
      <Patch className="right-[-8px] bottom-[-8px] left-[28px] h-[62px]" />
    </div>
  );
}
